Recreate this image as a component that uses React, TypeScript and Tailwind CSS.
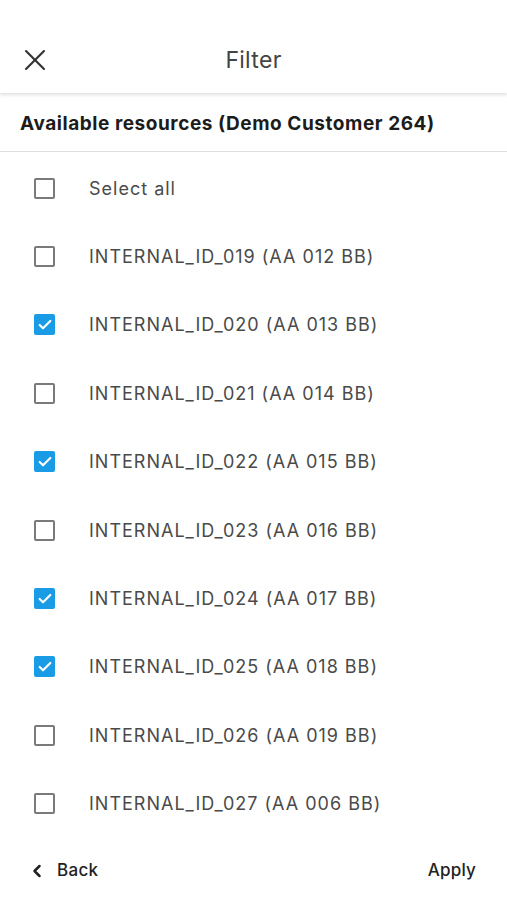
import { X, ChevronLeft, Check } from 'lucide-react'

type Resource = {
  id: string
  plate: string
  checked: boolean
}

const resources: Resource[] = [
  { id: 'INTERNAL_ID_019', plate: 'AA 012 BB', checked: false },
  { id: 'INTERNAL_ID_020', plate: 'AA 013 BB', checked: true },
  { id: 'INTERNAL_ID_021', plate: 'AA 014 BB', checked: false },
  { id: 'INTERNAL_ID_022', plate: 'AA 015 BB', checked: true },
  { id: 'INTERNAL_ID_023', plate: 'AA 016 BB', checked: false },
  { id: 'INTERNAL_ID_024', plate: 'AA 017 BB', checked: true },
  { id: 'INTERNAL_ID_025', plate: 'AA 018 BB', checked: true },
  { id: 'INTERNAL_ID_026', plate: 'AA 019 BB', checked: false },
  { id: 'INTERNAL_ID_027', plate: 'AA 006 BB', checked: false },
]

function Box({ checked }: { checked: boolean }) {
  return checked ? (
    <span className="w-[21px] h-[21px] rounded-[2px] bg-[#1a9be5] flex items-center justify-center">
      <Check size={16} strokeWidth={3.2} className="text-white" />
    </span>
  ) : (
    <span className="w-[21px] h-[21px] rounded-[2px] border-2 border-[#7a7a7a]" />
  )
}

function Row({ label, checked }: { label: string; checked: boolean }) {
  return (
    <div className="h-[68.4px] flex items-center pl-[34px]">
      <Box checked={checked} />
      <span className="ml-[34px] text-[18px] text-[#4a4a4a] tracking-[1px]">{label}</span>
    </div>
  )
}

export default function App() {
  return (
    <div className="w-[507px] h-[900px] bg-white flex flex-col font-['Inter',sans-serif] overflow-hidden">
      <header className="h-[93px] flex items-center relative shadow-[0_2px_3px_rgba(0,0,0,0.12)] z-10 pt-[27px]">
        <X size={36} strokeWidth={1.4} className="absolute left-[17px] top-[42px] text-[#333]" />
        <h1 className="w-full text-center text-[23px] text-[#444] tracking-[0.3px]">Filter</h1>
      </header>
      <div className="h-[59px] flex items-center px-[20px] pt-[4px] border-b border-[#dedede]">
        <span className="text-[19px] font-bold text-[#1c1c1c] tracking-[0.55px]">Available resources (Demo Customer 264)</span>
      </div>
      <div className="flex flex-col pt-[2px]">
        <Row label="Select all" checked={false} />
        {resources.map(r => (
          <Row key={r.id} label={`${r.id} (${r.plate})`} checked={r.checked} />
        ))}
      </div>
      <footer className="flex-1 flex items-center justify-between pl-[27px] pr-[31px] pt-[4px]">
        <button className="flex items-center gap-[10px] text-[17px] font-medium text-[#222] tracking-[0.3px]">
          <ChevronLeft size={20} strokeWidth={3} />
          Back
        </button>
        <button className="text-[17px] font-medium text-[#222] tracking-[0.2px]">Apply</button>
      </footer>
    </div>
  )
}
